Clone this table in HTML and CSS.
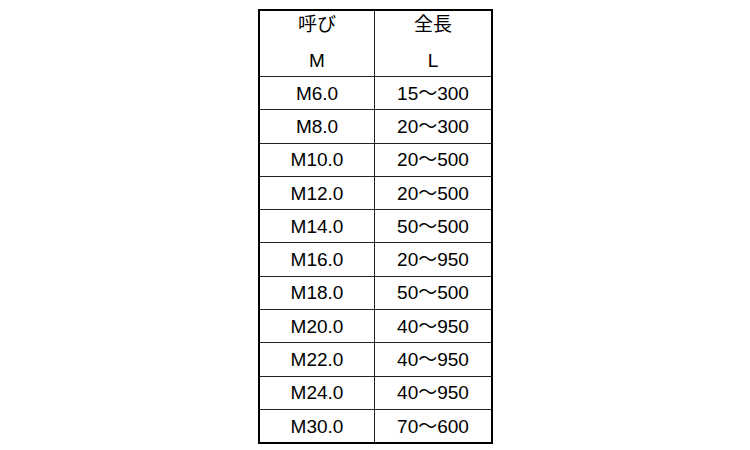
FILE: index.html
```html
<!DOCTYPE html>
<html lang="ja">
<head>
<meta charset="utf-8">
<title>呼び・全長</title>
<link rel="stylesheet" href="styles.css">
</head>
<body>
<div class="spec">
  <div class="cell head left"><span class="line">呼び</span><span class="line">M</span></div>
  <div class="cell head"><span class="line">全長</span><span class="line">L</span></div>
  <div class="cell left">M6.0</div><div class="cell">15〜300</div>
  <div class="cell left">M8.0</div><div class="cell">20〜300</div>
  <div class="cell left">M10.0</div><div class="cell">20〜500</div>
  <div class="cell left">M12.0</div><div class="cell">20〜500</div>
  <div class="cell left">M14.0</div><div class="cell">50〜500</div>
  <div class="cell left">M16.0</div><div class="cell">20〜950</div>
  <div class="cell left">M18.0</div><div class="cell">50〜500</div>
  <div class="cell left">M20.0</div><div class="cell">40〜950</div>
  <div class="cell left">M22.0</div><div class="cell">40〜950</div>
  <div class="cell left">M24.0</div><div class="cell">40〜950</div>
  <div class="cell left">M30.0</div><div class="cell">70〜600</div>
</div>
</body>
</html>
```
FILE: styles.css
```css
html, body {
  margin: 0;
  padding: 0;
  background: #fff;
}
body {
  font-family: "Liberation Sans", "Noto Sans CJK JP", sans-serif;
  font-size: 19px;
  color: #000;
}
.spec {
  box-sizing: border-box;
  margin: 9px 0 0 258px;
  width: 235px;
  border: 2px solid #000;
  display: grid;
  grid-template-columns: 115px 1fr;
  grid-template-rows: 65px;
  grid-auto-rows: 33.3px;
}
.cell {
  box-sizing: border-box;
  border-top: 1px solid #222;
  display: flex;
  align-items: center;
  justify-content: center;
  line-height: 1;
}
.left {
  border-right: 1px solid #222;
}
.head {
  border-top: none;
  flex-direction: column;
  justify-content: flex-start;
}
.line {
  display: block;
  height: 28px;
  line-height: 28px;
}
.line + .line {
  margin-top: 8px;
}
```
